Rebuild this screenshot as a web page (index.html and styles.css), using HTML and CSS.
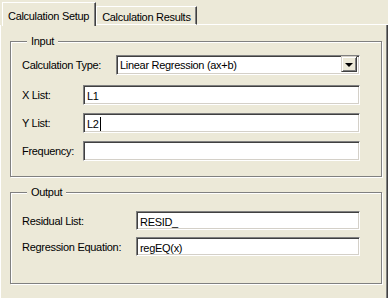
FILE: index.html
```html
<!DOCTYPE html>
<html lang="en">
<head>
    <link rel="stylesheet" href="styles.css">
</head>
<body>
    <div class="tabs">
        <div class="tab active">Calculation Setup</div>
        <div class="tab">Calculation Results</div>
        <div class="tab-fill"></div>
    </div>
    <div class="panel">
        <fieldset class="group input-group">
            <legend>Input</legend>
            <div class="row first">
                <label class="lbl lbl-type">Calculation Type:</label>
                <div class="select">
                    <span class="select-text">Linear Regression (ax+b)</span>
                    <span class="drop"><span class="arrow"></span></span>
                </div>
            </div>
            <div class="row">
                <label class="lbl lbl-list">X List:</label>
                <div class="field">L1</div>
            </div>
            <div class="row">
                <label class="lbl lbl-list">Y List:</label>
                <div class="field">L2<span class="caret"></span></div>
            </div>
            <div class="row">
                <label class="lbl lbl-list">Frequency:</label>
                <div class="field"></div>
            </div>
        </fieldset>

        <fieldset class="group output-group">
            <legend>Output</legend>
            <div class="row first">
                <label class="lbl lbl-out">Residual List:</label>
                <div class="field">RESID_</div>
            </div>
            <div class="row">
                <label class="lbl lbl-out">Regression Equation:</label>
                <div class="field">regEQ(x)</div>
            </div>
        </fieldset>
    </div>
</body>
</html>
```

FILE: styles.css
```css
body {
    margin: 0;
    background: #ece9d8;
    font-family: "Liberation Sans", Arial, sans-serif;
    font-size: 11px;
    letter-spacing: -0.3px;
    color: #000;
    width: 388px;
    height: 298px;
    overflow: hidden;
}

.tabs {
    display: flex;
    align-items: flex-end;
    height: 25px;
    padding-left: 2px;
}

.tab {
    box-sizing: border-box;
    height: 19px;
    padding: 4px 5px 0 5px;
    border-top: 1px solid #fff;
    border-left: 1px solid #fff;
    border-right: 1px solid #404040;
    box-shadow: inset -1px 0 0 #808080;
    border-bottom: 1px solid #fff;
    white-space: nowrap;
}

.tab.active {
    height: 24px;
    margin-bottom: -1px;
    padding: 7px 6px 0 5px;
    border-bottom: 0;
    position: relative;
    z-index: 1;
    background: #ece9d8;
}

.tab-fill {
    flex: 1;
    border-bottom: 1px solid #fff;
}

.panel {
    box-sizing: border-box;
    height: 273px;
    border-left: 1px solid #fff;
    border-right: 1px solid #404040;
    box-shadow: inset -1px 0 0 #808080;
    padding: 10px 5px 0 9px;
}

.group {
    margin: 0;
    padding: 0 21px 0 11px;
    border: 1px solid #808080;
    box-shadow: inset 1px 1px 0 #fff, 1px 1px 0 #fff;
}

.group legend {
    margin-left: 5px;
    padding: 0 4px;
    height: 13px;
    line-height: 13px;
    background: #ece9d8;
}

.input-group {
    height: 142px;
    box-sizing: border-box;
    padding-top: 7px;
}

.output-group {
    margin-top: 9px;
    height: 98px;
    box-sizing: border-box;
    padding-top: 12px;
}

.row {
    display: flex;
    align-items: center;
    margin-top: 8px;
}

.row.first {
    margin-top: 0;
}

.input-group .row.first + .row {
    margin-top: 10px;
}

.output-group .row {
    margin-top: 7px;
}

.output-group .row.first {
    margin-top: 0;
}

.lbl {
    flex: none;
}

.lbl-type {
    width: 94px;
}

.lbl-list {
    width: 61px;
}

.lbl-out {
    width: 114px;
}

.field,
.select {
    flex: 1;
    box-sizing: border-box;
    height: 20px;
    background: #fff;
    border-top: 1px solid #808080;
    border-left: 1px solid #808080;
    border-right: 1px solid #fff;
    border-bottom: 1px solid #fff;
    box-shadow: inset 1px 1px 0 #404040, inset -1px -1px 0 #d4d0c8;
    padding: 2px 0 0 3px;
    line-height: 14px;
    display: flex;
    align-items: center;
}

.output-group .field {
    height: 19px;
}

.select {
    padding: 2px 2px 2px 3px;
}

.select-text {
    flex: 1;
}

.drop {
    box-sizing: border-box;
    width: 16px;
    height: 16px;
    margin-top: -2px;
    background: #ece9d8;
    border-top: 1px solid #d4d0c8;
    border-left: 1px solid #d4d0c8;
    border-right: 1px solid #404040;
    border-bottom: 1px solid #404040;
    box-shadow: inset 1px 1px 0 #fff, inset -1px -1px 0 #808080;
    display: flex;
    align-items: center;
    justify-content: center;
}

.arrow {
    width: 0;
    height: 0;
    border-left: 4px solid transparent;
    border-right: 4px solid transparent;
    border-top: 4px solid #000;
    margin-top: 1px;
}

.caret {
    display: inline-block;
    width: 0;
    height: 14px;
    border-left: 1px solid #000;
    margin-left: 1px;
}
```
